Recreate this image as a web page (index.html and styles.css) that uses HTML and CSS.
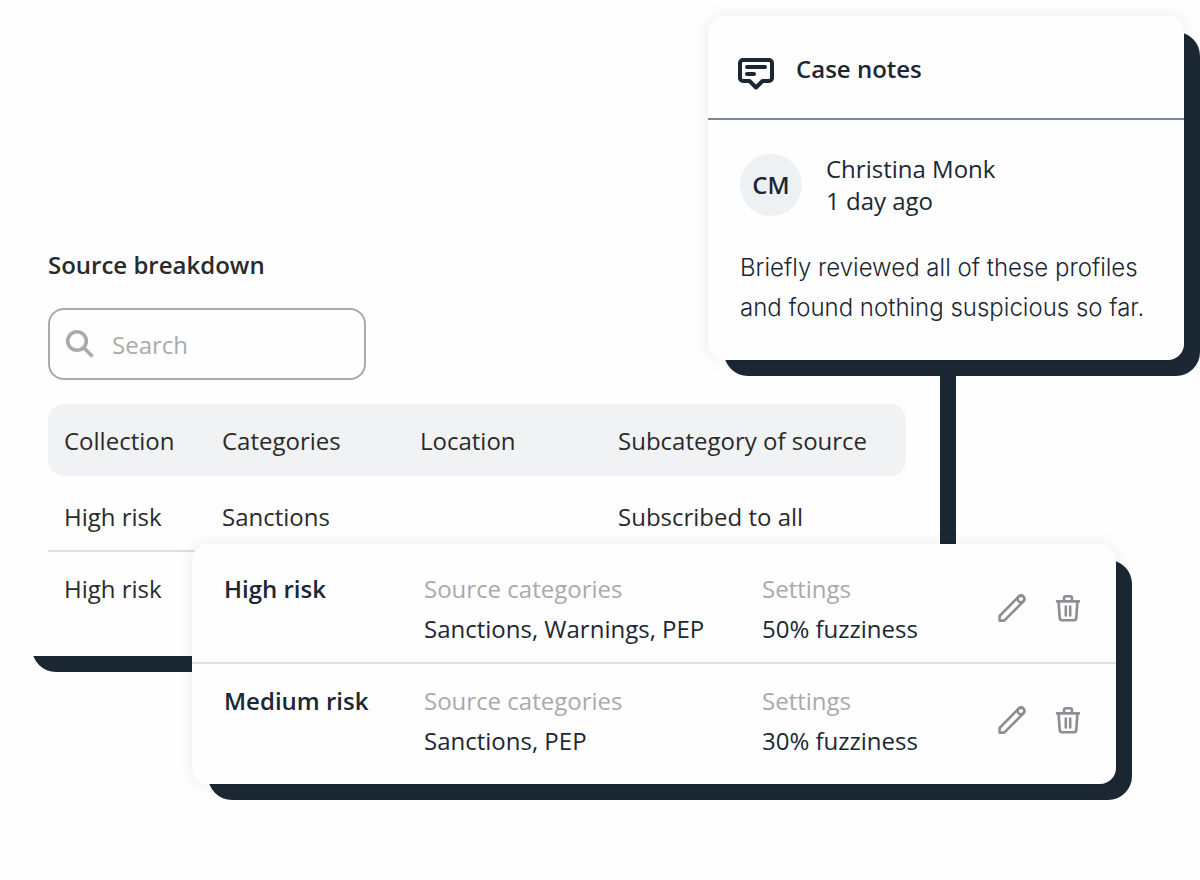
FILE: index.html
```html
<!DOCTYPE html>
<html lang="en">
<head>
  <meta charset="UTF-8" />
  <meta name="viewport" content="width=device-width, initial-scale=1" />
  <title>Source breakdown</title>
  <link rel="stylesheet" href="styles.css">
</head>
<body>

  <!-- Icons shared by the profile rows -->
  <svg class="sprite" aria-hidden="true">
    <symbol id="icon-edit" viewBox="0 1 32 32">
      <path d="M3.6 28.600v-4.600L22.600 4.600a3.300 3.300 0 0 1 4.800 4.800L8.200 28.600z"/>
      <circle cx="25" cy="7" r="3.400"/>
    </symbol>
    <symbol id="icon-delete" viewBox="0 1 32 32">
      <path d="M5 9.400h22M12 9V6.200a2 2 0 0 1 2-2h4a2 2 0 0 1 2 2V9M6.600 9.400l1.100 16.400a2.600 2.600 0 0 0 2.600 2.400h11.400a2.600 2.600 0 0 0 2.600-2.400l1.100-16.400M13.800 14.600v8.800M18.200 14.600v8.800"/>
    </symbol>
  </svg>

  <main class="stage">

    <!-- Source breakdown -->
    <section class="card panel">
      <div class="card-body">
        <h2>Source breakdown</h2>
        <label class="search">
          <svg viewBox="0 0 32 32" aria-hidden="true">
            <circle cx="13" cy="13" r="9.300"/>
            <path d="M19.800 19.800l8.700 8.700"/>
          </svg>
          <input type="search" placeholder="Search" aria-label="Search" />
        </label>
        <table>
          <thead>
            <tr>
              <th>Collection</th>
              <th>Categories</th>
              <th>Location</th>
              <th>Subcategory of source</th>
            </tr>
          </thead>
          <tbody>
            <tr>
              <td>High risk</td>
              <td>Sanctions</td>
              <td></td>
              <td>Subscribed to all</td>
            </tr>
            <tr>
              <td>High risk</td>
              <td></td>
              <td></td>
              <td></td>
            </tr>
          </tbody>
        </table>
      </div>
    </section>

    <!-- Risk profiles -->
    <section class="card profiles">
      <div class="card-body">
        <div class="profile">
          <h3>High risk</h3>
          <div>
            <div class="label">Source categories</div>
            <div>Sanctions, Warnings, PEP</div>
          </div>
          <div>
            <div class="label">Settings</div>
            <div>50% fuzziness</div>
          </div>
          <div class="actions">
            <button aria-label="Edit"><svg><use href="#icon-edit"/></svg></button>
            <button aria-label="Delete"><svg><use href="#icon-delete"/></svg></button>
          </div>
        </div>
        <div class="profile">
          <h3>Medium risk</h3>
          <div>
            <div class="label">Source categories</div>
            <div>Sanctions, PEP</div>
          </div>
          <div>
            <div class="label">Settings</div>
            <div>30% fuzziness</div>
          </div>
          <div class="actions">
            <button aria-label="Edit"><svg><use href="#icon-edit"/></svg></button>
            <button aria-label="Delete"><svg><use href="#icon-delete"/></svg></button>
          </div>
        </div>
      </div>
    </section>

    <!-- Case notes -->
    <section class="card notes">
      <div class="card-body">
        <header>
          <svg viewBox="0 0 40 40" aria-hidden="true">
            <path d="M7 7h26a3 3 0 0 1 3 3v15a3 3 0 0 1-3 3h-6.500L20 34.500 13.500 28H7a3 3 0 0 1-3-3V10a3 3 0 0 1 3-3z"/>
            <path d="M11 14h18M11 21h7"/>
          </svg>
          <h2>Case notes</h2>
        </header>
        <article>
          <div class="author">
            <span class="avatar">CM</span>
            <div>
              <div>Christina Monk</div>
              <div>1 day ago</div>
            </div>
          </div>
          <p>Briefly reviewed all of these profiles and found nothing suspicious so far.</p>
        </article>
      </div>
    </section>

  </main>

</body>
</html>
```
FILE: styles.css
```css
:root {
  --navy: #1c2734;
  --text: #2a2a2a;
  --muted: #aaaaaa;
  --line: #dadfe5;
  --header-bg: #f1f2f4;
}

* {
  box-sizing: border-box;
}

body {
  margin: 0;
  background: #fefefe;
  color: var(--navy);
  font-family: 'Open Sans', 'Noto Sans', sans-serif;
  font-size: 24px;
  line-height: 32px;
}

h2,
h3,
p {
  margin: 0;
  font-size: 24px;
}

h2,
h3 {
  font-weight: 600;
}

.sprite {
  position: absolute;
  width: 0;
  height: 0;
}

.stage {
  position: relative;
  padding: 224px 0 80px;
}

/* White card on a solid offset block */
.card {
  position: relative;
}

.card::before {
  content: '';
  position: absolute;
  inset: 16px -16px -16px 16px;
  border-radius: 24px;
  background: var(--navy);
}

.card-body {
  position: relative;
  border-radius: 16px;
  background: #fefefe;
}

.profiles > .card-body,
.notes > .card-body {
  box-shadow: 0 0 16px rgba(0, 0, 0, 0.08);
}

/* Source breakdown */
.panel {
  margin: 0 260px 0 16px;
  color: var(--text);
}

.panel > .card-body {
  padding: 25px 34px 32px 32px;
}

.search {
  display: flex;
  align-items: center;
  gap: 16px;
  width: 318px;
  height: 72px;
  margin: 27px 0 24px;
  padding: 0 14px;
  border: 2px solid var(--muted);
  border-radius: 16px;
}

.search svg {
  flex: none;
  width: 32px;
  height: 32px;
  fill: none;
  stroke: var(--muted);
  stroke-width: 3.6;
}

.search input {
  width: 100%;
  padding: 2px 0 0;
  border: none;
  outline: none;
  background: transparent;
  color: inherit;
  font: inherit;
}

.search input::placeholder {
  color: var(--muted);
  opacity: 1;
}

table {
  width: 100%;
  table-layout: fixed;
  border-collapse: separate;
  border-spacing: 0;
}

th,
td {
  padding: 21px 16px 19px;
  text-align: left;
  font-weight: 400;
  white-space: nowrap;
}

th {
  background: var(--header-bg);
}

th:nth-child(1) {
  width: 158px;
  border-radius: 16px 0 0 16px;
}

th:nth-child(2),
th:nth-child(3) {
  width: 198px;
}

th:last-child {
  border-radius: 0 16px 16px 0;
}

tbody tr:first-child td {
  padding-top: 25px;
  padding-bottom: 17px;
  border-bottom: 2px solid var(--line);
}

/* Risk profiles */
.profiles {
  margin: -112px 84px 0 192px;
  line-height: 40px;
}

.profiles > .card-body {
  padding: 8px 0;
}

.profile {
  display: grid;
  grid-template-columns: 200px 1fr 234px auto;
  padding: 17px 32px 15px;
}

.profile:first-child {
  padding-bottom: 13px;
  border-bottom: 2px solid var(--line);
}

.label {
  color: var(--muted);
}

.actions {
  display: flex;
  align-items: center;
  gap: 24px;
}

.actions button {
  width: 32px;
  height: 32px;
  padding: 0;
  border: none;
  background: none;
  cursor: pointer;
}

.actions svg {
  display: block;
  width: 32px;
  height: 32px;
  fill: none;
  stroke: #8b8f93;
  stroke-width: 2.6;
  stroke-linejoin: round;
  stroke-linecap: round;
}

/* Case notes */
.notes {
  position: absolute;
  top: 16px;
  left: 59%;
  right: 16px;
}

.notes header {
  display: flex;
  gap: 20px;
  padding: 37px 28px 25px;
  border-bottom: 2px solid #7589a0;
}

.notes header svg {
  width: 40px;
  height: 40px;
  fill: none;
  stroke: var(--navy);
  stroke-width: 4;
  stroke-linejoin: round;
  stroke-linecap: round;
}

.notes article {
  padding: 33px 32px 32px;
}

.author {
  display: flex;
  align-items: center;
  gap: 24px;
}

.avatar {
  display: flex;
  align-items: center;
  justify-content: center;
  width: 62px;
  height: 62px;
  border-radius: 50%;
  background: #edf1f4;
  font-weight: 600;
}

.notes p {
  margin-top: 31px;
  font-family: Inter, sans-serif;
  font-weight: 300;
  font-optical-sizing: none;
  line-height: 40px;
}
```
